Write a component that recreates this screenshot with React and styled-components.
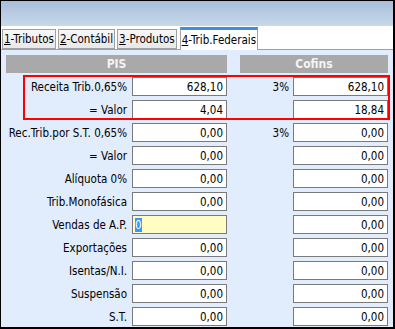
import React from "react";
import styled, { createGlobalStyle } from "styled-components";

const Global = createGlobalStyle`
  html, body { margin: 0; padding: 0; background: #fff; }
  body { font-family: "DejaVu Sans", Verdana, sans-serif; font-stretch: condensed; font-size: 11px; }
`;

const Window = styled.div`
  width: 395px;
  height: 329px;
  box-sizing: border-box;
  border-left: 1px solid #000;
  border-top: 1px solid #000;
  border-right: 2px solid #000;
  border-bottom: 2px solid #000;
  display: flex;
  flex-direction: column;
  overflow: hidden;
`;

const TitleBar = styled.div`
  height: 25px;
  flex: none;
  background: linear-gradient(#a8bfd9, #c8d8ea);
`;

const TabStrip = styled.div`
  height: 24px;
  flex: none;
  background: #fff;
  border-bottom: 1px solid #a0a0a0;
  display: flex;
  align-items: flex-end;
  padding-left: 1px;
  gap: 2px;
  box-sizing: border-box;
`;

const Tab = styled.div`
  box-sizing: border-box;
  height: ${(p) => (p.$active ? "23px" : "20px")};
  margin-bottom: ${(p) => (p.$active ? "-1px" : "0")};
  margin-left: ${(p) => (p.$active ? "1px" : "0")};
  padding: 0 1px;
  display: flex;
  align-items: center;
  border: 1px solid #a0a0a0;
  border-bottom: ${(p) => (p.$active ? "none" : "1px solid #a0a0a0")};
  border-top: ${(p) => (p.$active ? "3px solid #3d8ee0" : "1px solid #a0a0a0")};
  background: ${(p) => (p.$active ? "#fff" : "linear-gradient(#f7f7f7, #e8e8e8)")};
  color: #000;
  font-size: 11.5px;
  white-space: nowrap;
  u { text-decoration: underline; }
`;

const Content = styled.div`
  flex: 1;
  background: #e1ecfc;
  padding: 5px 0 0 5px;
  display: flex;
  flex-direction: column;
  gap: 4px;
`;

const HeaderRow = styled.div`
  display: flex;
  gap: 13px;
`;

const HeaderBar = styled.div`
  width: ${(p) => p.$w}px;
  height: 18px;
  background: #a9a9a9;
  color: #f4f4f4;
  font-weight: bold;
  font-size: 12px;
  display: flex;
  align-items: center;
  justify-content: center;
`;

const Rows = styled.div`
  display: flex;
  flex-direction: column;
  gap: 4px;
`;

const Group = styled.div`
  position: relative;
  display: flex;
  flex-direction: column;
  gap: 4px;
`;

const RedFrame = styled.div`
  position: absolute;
  left: 17px;
  top: -2px;
  width: 367px;
  height: 45px;
  box-sizing: border-box;
  border: 2px solid #ff0000;
  pointer-events: none;
`;

const Row = styled.div`
  display: grid;
  grid-template-columns: 126px 95px 66px 95px;
  align-items: center;
  height: 19px;
  font-size: 11.5px;
`;

const Label = styled.div`
  text-align: right;
  padding-right: 5px;
  white-space: nowrap;
  color: #000;
`;

const Pct = styled.div`
  text-align: right;
  padding-right: 4px;
  color: #000;
`;

const Field = styled.div`
  box-sizing: border-box;
  height: 19px;
  border: 1px solid #7a7a7a;
  background: ${(p) => (p.$focus ? "#fffcc4" : "#fff")};
  display: flex;
  align-items: center;
  justify-content: ${(p) => (p.$focus ? "flex-start" : "flex-end")};
  padding: 0 3px 0 2px;
  color: #000;
  white-space: nowrap;
`;

const Sel = styled.span`
  background: #3399ff;
  color: #fff;
`;

const rows = [
  ["Rec.Trib.por S.T. 0,65%", "0,00", "3%", "0,00"],
  ["= Valor", "0,00", "", "0,00"],
  ["Alíquota 0%", "0,00", "", "0,00"],
  ["Trib.Monofásica", "0,00", "", "0,00"],
  ["Vendas de A.P.", null, "", "0,00"],
  ["Exportações", "0,00", "", "0,00"],
  ["Isentas/N.I.", "0,00", "", "0,00"],
  ["Suspensão", "0,00", "", "0,00"],
  ["S.T.", "0,00", "", "0,00"],
];

function DataRow({ label, pis, pct, cof }) {
  return (
    <Row>
      <Label>{label}</Label>
      {pis === null ? (
        <Field $focus>
          <Sel>0</Sel>
        </Field>
      ) : (
        <Field>{pis}</Field>
      )}
      <Pct>{pct}</Pct>
      <Field>{cof}</Field>
    </Row>
  );
}

export default function App() {
  return (
    <>
      <Global />
      <Window>
        <TitleBar />
        <TabStrip>
          <Tab><u>1</u>-Tributos</Tab>
          <Tab><u>2</u>-Contábil</Tab>
          <Tab><u>3</u>-Produtos</Tab>
          <Tab $active><u>4</u>-Trib.Federais</Tab>
        </TabStrip>
        <Content>
          <HeaderRow>
            <HeaderBar $w={221}>PIS</HeaderBar>
            <HeaderBar $w={148}>Cofins</HeaderBar>
          </HeaderRow>
          <Rows>
            <Group>
              <DataRow label="Receita Trib.0,65%" pis="628,10" pct="3%" cof="628,10" />
              <DataRow label="= Valor" pis="4,04" pct="" cof="18,84" />
              <RedFrame />
            </Group>
            {rows.map((r) => (
              <DataRow key={r[0]} label={r[0]} pis={r[1]} pct={r[2]} cof={r[3]} />
            ))}
          </Rows>
        </Content>
      </Window>
    </>
  );
}
